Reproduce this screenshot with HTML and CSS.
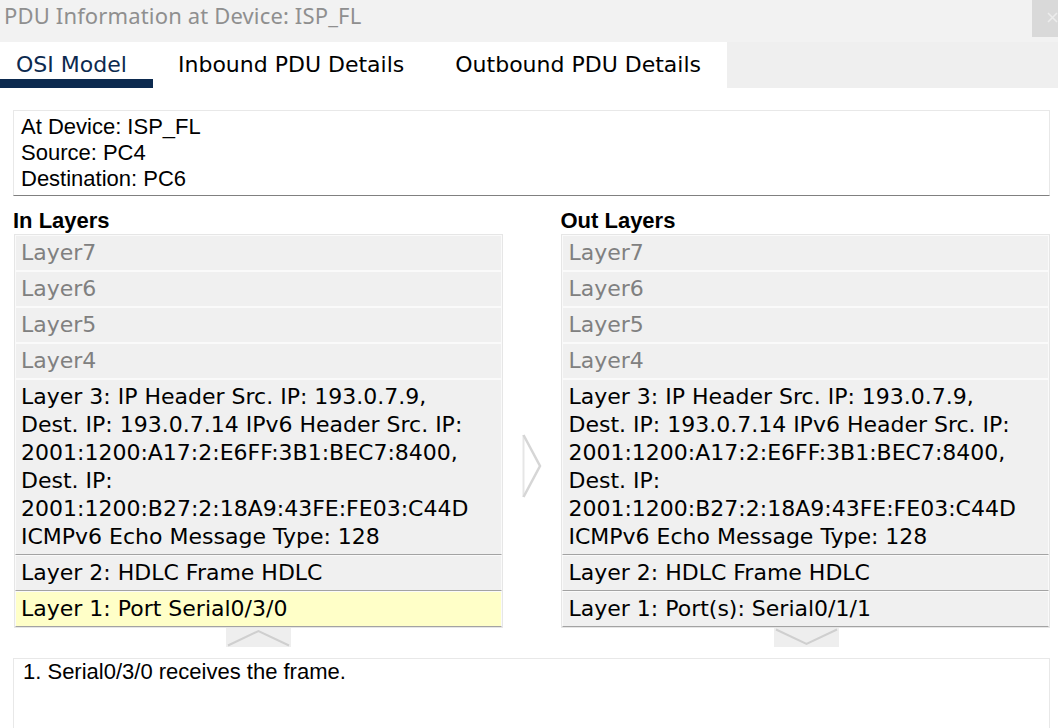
FILE: index.html
```html
<!DOCTYPE html>
<html>
<head>
<meta charset="utf-8">
<link rel="stylesheet" href="styles.css">
</head>
<body>
<div class="window">
  <div class="titlebar">
    <span class="title">PDU Information at Device: ISP_FL</span>
    <div class="close"><svg width="26" height="37" viewBox="0 0 26 37"><path d="M16 13 L25 22 M25 13 L16 22" stroke="#ececec" stroke-width="1.6" fill="none"/></svg></div>
  </div>
  <div class="tabbar">
    <div class="tab tab-active">OSI Model</div>
    <div class="tab">Inbound PDU Details</div>
    <div class="tab">Outbound PDU Details</div>
    <div class="tab-fill"></div>
  </div>
  <div class="content">
    <div class="info">
      <div>At Device: ISP_FL</div>
      <div>Source: PC4</div>
      <div>Destination: PC6</div>
    </div>
    <div class="layers">
      <div class="col">
        <div class="col-title">In Layers</div>
        <div class="box">
          <div class="row dim">Layer7</div>
          <div class="row dim">Layer6</div>
          <div class="row dim">Layer5</div>
          <div class="row dim">Layer4</div>
          <div class="row act">Layer 3: IP Header Src. IP: 193.0.7.9,<br>Dest. IP: 193.0.7.14 IPv6 Header Src. IP:<br>2001:1200:A17:2:E6FF:3B1:BEC7:8400,<br>Dest. IP:<br>2001:1200:B27:2:18A9:43FE:FE03:C44D<br>ICMPv6 Echo Message Type: 128</div>
          <div class="row act">Layer 2: HDLC Frame HDLC</div>
          <div class="row act sel">Layer 1: Port Serial0/3/0</div>
        </div>
        <div class="nav"><svg width="65" height="19" viewBox="0 0 65 19"><polyline points="2,17.5 32.5,3 63,17.5" stroke="#cfcfcf" stroke-width="2" fill="none"/></svg></div>
      </div>
      <div class="mid">
        <svg width="22" height="66" viewBox="0 0 22 66"><path d="M2.5 2 L2.5 64" stroke="#e6e6e6" stroke-width="2" fill="none"/><polyline points="2.5,2 19,33 2.5,64" stroke="#d6d6d6" stroke-width="2.5" fill="none"/></svg>
      </div>
      <div class="col">
        <div class="col-title">Out Layers</div>
        <div class="box">
          <div class="row dim">Layer7</div>
          <div class="row dim">Layer6</div>
          <div class="row dim">Layer5</div>
          <div class="row dim">Layer4</div>
          <div class="row act">Layer 3: IP Header Src. IP: 193.0.7.9,<br>Dest. IP: 193.0.7.14 IPv6 Header Src. IP:<br>2001:1200:A17:2:E6FF:3B1:BEC7:8400,<br>Dest. IP:<br>2001:1200:B27:2:18A9:43FE:FE03:C44D<br>ICMPv6 Echo Message Type: 128</div>
          <div class="row act">Layer 2: HDLC Frame HDLC</div>
          <div class="row act">Layer 1: Port(s): Serial0/1/1</div>
        </div>
        <div class="nav"><svg width="65" height="19" viewBox="0 0 65 19"><polyline points="2,1.5 32.5,16 63,1.5" stroke="#cfcfcf" stroke-width="2" fill="none"/></svg></div>
      </div>
    </div>
    <div class="desc">1. Serial0/3/0 receives the frame.</div>
  </div>
</div>
</body>
</html>
```
FILE: styles.css
```css
html, body {
  margin: 0;
  padding: 0;
  background: #ffffff;
}
.window {
  width: 1058px;
  height: 728px;
  overflow: hidden;
  display: flex;
  flex-direction: column;
}
.titlebar {
  flex-shrink: 0;
  height: 42px;
  background: #f2f2f2;
  display: flex;
  align-items: flex-start;
  justify-content: space-between;
}
.title {
  font-family: "Noto Sans", sans-serif;
  font-size: 22px;
  letter-spacing: 0.15px;
  line-height: 30px;
  color: #8f8f8f;
  padding-left: 4px;
}
.close {
  width: 26px;
  height: 37px;
  background: #d9d9d9;
}
.close svg { display: block; }
.tabbar {
  flex-shrink: 0;
  height: 46px;
  display: flex;
  font-family: "DejaVu Sans", Verdana, sans-serif;
  font-size: 22px;
  background: #ffffff;
}
.tab {
  padding: 0 26px 0 25px;
  line-height: 46px;
  color: #000;
  white-space: nowrap;
}
.tab-active {
  padding: 0 24px 0 16px;
  color: #0c2a4f;
  line-height: 46px;
  height: 37px;
  border-bottom: 9px solid #0c2a4f;
  width: 113px;
}
.tab-fill {
  flex: 1;
  background: #efefef;
}
.content {
  flex-shrink: 0;
  padding: 22px 8px 0 13px;
  display: flex;
  flex-direction: column;
}
.info {
  border-top: 1px solid #e8e8e8;
  border-left: 1px solid #e8e8e8;
  border-right: 1px solid #e8e8e8;
  border-bottom: 1px solid #808080;
  padding: 3px 7px 3px 7px;
  font-family: "Liberation Sans", Arial, sans-serif;
  font-size: 22px;
  line-height: 26px;
  color: #000;
}
.layers {
  display: flex;
  margin-top: 12px;
}
.col {
  width: 490px;
  display: flex;
  flex-direction: column;
}
.col-title {
  font-family: "Liberation Sans", Arial, sans-serif;
  font-weight: bold;
  font-size: 22px;
  line-height: 26px;
  height: 26px;
}
.box {
  margin-left: 1px;
  border: 1px solid #e6e6e6;
  background: #ffffff;
}
.row {
  font-family: "DejaVu Sans", Verdana, sans-serif;
  font-size: 22px;
  line-height: 28px;
  padding: 3px 5px;
  background: #f0f0f0;
  border: 1px solid #fafafa;
  white-space: nowrap;
}
.dim { color: #808080; }
.act {
  color: #000;
  border-bottom: 1px solid #a3a3a3;
}
.sel { background: #ffffc8; }
.nav {
  display: flex;
  justify-content: center;
  padding-left: 2px;
}
.nav svg {
  display: block;
  background: #eeeeee;
}
.mid {
  width: 58px;
  display: flex;
  justify-content: center;
  padding-top: 225px;
}
.mid svg { display: block; }
.desc {
  margin-top: 11px;
  border-top: 1px solid #e8e8e8;
  border-left: 1px solid #e8e8e8;
  border-right: 1px solid #e8e8e8;
  height: 80px;
  padding: 0 9px;
  font-family: "Liberation Sans", Arial, sans-serif;
  font-size: 22px;
  line-height: 26px;
  color: #000;
}
```
